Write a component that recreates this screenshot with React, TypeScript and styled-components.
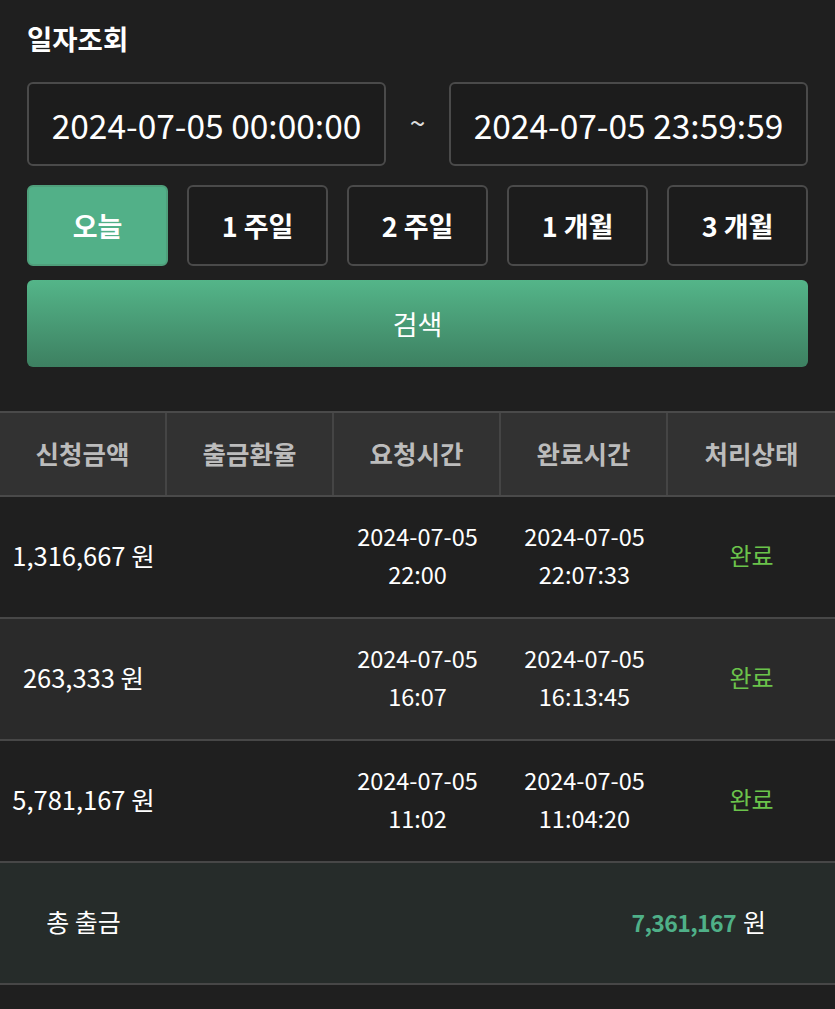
import React from "react";
import styled, { createGlobalStyle } from "styled-components";

const Global = createGlobalStyle`
  html, body { margin: 0; padding: 0; background: #1f1f1f; }
  body { font-family: "Noto Sans CJK KR", "Noto Sans", sans-serif; color: #fff; }
  * { box-sizing: border-box; }
`;

const Page = styled.div`
  width: 835px;
  min-height: 1009px;
  background: #1f1f1f;
`;

const Top = styled.div`
  padding: 17px 27px 0 27px;
`;

const Title = styled.h1`
  margin: 0;
  font-size: 27.5px;
  font-weight: 700;
  line-height: 42px;
  color: #fff;
`;

const DateRow = styled.div`
  margin-top: 23px;
  display: grid;
  grid-template-columns: 359px 1fr 359px;
  align-items: center;
`;

const DateBox = styled.div`
  height: 84px;
  border: 2px solid #4a4a4a;
  border-radius: 6px;
  background: #1c1c1c;
  display: flex;
  align-items: center;
  justify-content: center;
  font-size: 33.5px;
  color: #fff;
`;

const Tilde = styled.div`
  text-align: center;
  font-size: 28px;
  color: #ddd;
  margin-top: -4px;
`;

const PresetRow = styled.div`
  margin-top: 19px;
  display: grid;
  grid-template-columns: repeat(5, 1fr);
  gap: 19px;
`;

const Preset = styled.button<{ $active?: boolean }>`
  height: 81px;
  border-radius: 6px;
  border: 2px solid ${(p) => (p.$active ? "#4f9f7b" : "#4a4a4a")};
  background: ${(p) => (p.$active ? "#52b088" : "#1c1c1c")};
  color: #fff;
  font-family: inherit;
  font-size: 27px;
  font-weight: 700;
  display: flex;
  align-items: center;
  justify-content: center;
  padding: 0;
`;

const SearchButton = styled.button`
  margin-top: 14px;
  width: 100%;
  height: 87px;
  border: none;
  border-radius: 6px;
  background: linear-gradient(180deg, #54b589 0%, #3d8061 100%);
  color: #fff;
  font-family: inherit;
  font-size: 27px;
  font-weight: 400;
`;

const Table = styled.div`
  margin-top: 44px;
  border-top: 2px solid #4a4a4a;
`;

const HeaderRow = styled.div`
  display: grid;
  grid-template-columns: repeat(5, 1fr);
  height: 84px;
  background: #323232;
  border-bottom: 2px solid #4a4a4a;
`;

const HeadCell = styled.div<{ $last?: boolean }>`
  display: flex;
  align-items: center;
  justify-content: center;
  font-size: 25.5px;
  font-weight: 700;
  color: #bcbcbc;
  padding-bottom: 4px;
  border-right: ${(p) => (p.$last ? "none" : "2px solid #454545")};
`;

const Row = styled.div<{ $alt?: boolean }>`
  display: grid;
  grid-template-columns: repeat(5, 1fr);
  height: 122px;
  background: ${(p) => (p.$alt ? "#2a2a2a" : "#1f1f1f")};
  border-bottom: 2px solid #474747;
`;

const Cell = styled.div<{ $status?: boolean; $amount?: boolean }>`
  display: flex;
  flex-direction: column;
  align-items: center;
  justify-content: center;
  font-size: ${(p) => (p.$amount ? "25.5px" : p.$status ? "24px" : "23.5px")};
  line-height: 38px;
  color: ${(p) => (p.$status ? "#6bc34b" : "#fff")};
  white-space: nowrap;
  padding-bottom: 4px;
`;

const TotalRow = styled.div`
  display: flex;
  align-items: center;
  height: 122px;
  background: #262c2a;
  border-bottom: 2px solid #474747;
  font-size: 25px;
  padding-bottom: 4px;
`;

const TotalLabel = styled.div`
  width: 167px;
  text-align: center;
  color: #fff;
`;

const TotalAmount = styled.div`
  margin-left: auto;
  padding-right: 69px;
  color: #fff;
  display: flex;
  align-items: baseline;
`;

const Green = styled.span`
  color: #4fb088;
  font-size: 23px;
  font-weight: 700;
  letter-spacing: -0.6px;
  margin-right: 7px;
`;

const presets = ["오늘", "1 주일", "2 주일", "1 개월", "3 개월"];
const headers = ["신청금액", "출금환율", "요청시간", "완료시간", "처리상태"];

const rows = [
  { amount: "1,316,667 원", req: ["2024-07-05", "22:00"], done: ["2024-07-05", "22:07:33"] },
  { amount: "263,333 원", req: ["2024-07-05", "16:07"], done: ["2024-07-05", "16:13:45"] },
  { amount: "5,781,167 원", req: ["2024-07-05", "11:02"], done: ["2024-07-05", "11:04:20"] },
];

export default function App() {
  return (
    <Page>
      <Global />
      <Top>
        <Title>일자조회</Title>
        <DateRow>
          <DateBox>2024-07-05 00:00:00</DateBox>
          <Tilde>~</Tilde>
          <DateBox>2024-07-05 23:59:59</DateBox>
        </DateRow>
        <PresetRow>
          {presets.map((p, i) => (
            <Preset key={p} $active={i === 0}>
              {p}
            </Preset>
          ))}
        </PresetRow>
        <SearchButton>검색</SearchButton>
      </Top>
      <Table>
        <HeaderRow>
          {headers.map((h, i) => (
            <HeadCell key={h} $last={i === headers.length - 1}>
              {h}
            </HeadCell>
          ))}
        </HeaderRow>
        {rows.map((r, i) => (
          <Row key={i} $alt={i === 1}>
            <Cell $amount>{r.amount}</Cell>
            <Cell />
            <Cell>
              <span>{r.req[0]}</span>
              <span>{r.req[1]}</span>
            </Cell>
            <Cell>
              <span>{r.done[0]}</span>
              <span>{r.done[1]}</span>
            </Cell>
            <Cell $status>완료</Cell>
          </Row>
        ))}
        <TotalRow>
          <TotalLabel>총 출금</TotalLabel>
          <TotalAmount>
            <Green>7,361,167</Green>원
          </TotalAmount>
        </TotalRow>
      </Table>
    </Page>
  );
}
